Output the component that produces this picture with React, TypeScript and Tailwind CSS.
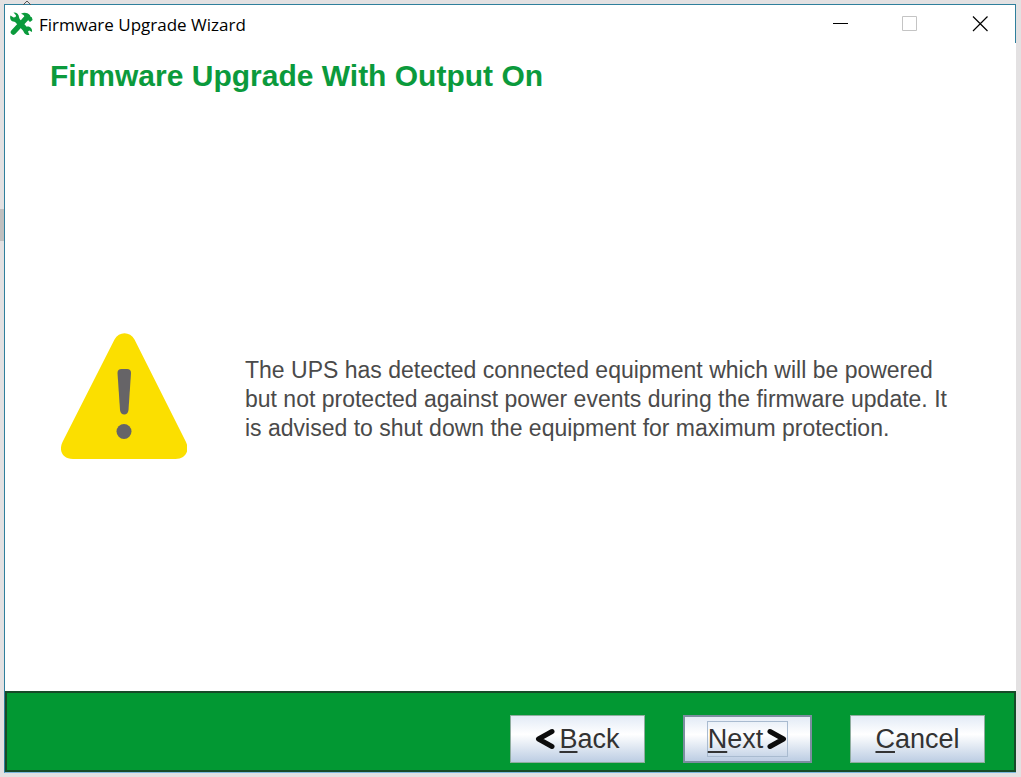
import React from 'react';

const FONT = "font-['Liberation_Sans',Arial,sans-serif]";

/** Crossed wrench and hammer, shown at the left of the title bar. */
function ToolsIcon() {
  return (
    <svg viewBox="0 0 24 24" className="size-6 shrink-0" aria-hidden="true">
      <g stroke="#0b9a3c" fill="none">
        <path d="M6.5 6.5L18 19" strokeWidth="5.500" />
        <path d="M17.5 6L4.500 20" strokeWidth="5.500" strokeLinecap="round" />
      </g>
      <g fill="#0b9a3c">
        <path d="M4.5 .5L7 3.200 6.6 5 4.6 5.400 1.400 3.600C.4 7.200 2.400 10 5.6 9.800L8.6 9.8 10.6 7.6 10 5C9.8 2.400 7.600 .2 4.500 .5z" />
        <path d="M12 1.8C15 .2 18.400 .6 20.8 3L21.6 4.800 22.800 5.200 23.6 8 21 10 19.4 8.4 19 7.2 16 9 13.6 6.8 15.6 4.4C14.8 3 13.6 2.4 12 1.8z" />
        <path d="M14.500 18.600L18.2 14.500C21.400 14.200 23.600 16.800 23 20L20.2 18.400 19 19.600 20.400 23C17.400 23.600 14.500 21.400 14.500 18.600z" />
      </g>
    </svg>
  );
}

function WarningIcon() {
  return (
    <svg viewBox="0 0 126 128" className="h-32 w-[126px] shrink-0" role="img" aria-label="Warning">
      <path
        d="M53.5 7.5C58-.8 69-.8 73.5 7.5L124.500 109C129.500 118.500 124.500 127 114.500 127H12C1.500 127-3 118.500 2 109z"
        fill="#fbdf00"
      />
      <path
        d="M56.500 41Q56.500 37 60.500 37H66Q70 37 70 41L67.500 78C67 84 59.500 84 59 78z"
        fill="#666467"
      />
      <circle cx="63" cy="99.500" r="7.500" fill="#666467" />
    </svg>
  );
}

function Chevron({ flip = false }: { flip?: boolean }) {
  return (
    <svg viewBox="0 0 20 22" className="h-[22px] w-5 shrink-0" aria-hidden="true">
      <path
        d={flip ? 'M3 3.500L16.500 11L3 18.500' : 'M17 3.500L3.500 11L17 18.500'}
        fill="none"
        stroke="#0c0c0c"
        strokeWidth="5"
        strokeLinecap="round"
        strokeLinejoin="round"
      />
    </svg>
  );
}

function TitleBar() {
  return (
    <header className="flex h-[38px] items-center pl-1">
      <ToolsIcon />
      <span className="ml-1.5 pt-0.5 font-['Open_Sans','Segoe_UI',sans-serif] text-[17px] leading-6 text-black">
        Firmware Upgrade Wizard
      </span>
      <div className="ml-auto flex">
        <button type="button" aria-label="Minimize" className="flex h-9 w-[70px] items-center justify-center">
          <svg viewBox="0 0 16 16" className="size-4" fill="none" stroke="#000" aria-hidden="true">
            <path d="M1 7.500H16" />
          </svg>
        </button>
        <button type="button" aria-label="Maximize" disabled className="flex h-9 w-[70px] items-center justify-center">
          <svg viewBox="0 0 16 16" className="size-4" fill="none" stroke="#c4c4c4" aria-hidden="true">
            <path d="M.5 .5H14.500V14.500H.5z" />
          </svg>
        </button>
        <button type="button" aria-label="Close" className="flex h-9 w-[70px] items-center justify-center">
          <svg viewBox="0 0 16 16" className="size-4" fill="none" stroke="#000" strokeWidth="1.200" aria-hidden="true">
            <path d="M1 .5L15.500 15M15.500 .5L1 15" />
          </svg>
        </button>
      </div>
    </header>
  );
}

const BUTTON =
  'flex h-12 items-center justify-center bg-linear-to-b from-[#e3ebf6] via-white via-40% to-[#bccde3] text-[27px] leading-8 text-[#333]';

function Footer() {
  return (
    <footer className="flex justify-end gap-[38px] border-2 border-[#174a28] bg-[#029833] pt-[22px] pr-[29px] pb-[7px]">
      <button type="button" className={`${BUTTON} w-[135px] border border-[#8fae9f]`}>
        <Chevron />
        <span className="ml-1">
          <u className="decoration-2 underline-offset-[3px]">B</u>ack
        </span>
      </button>
      <button type="button" className={`${BUTTON} w-[129px] border-2 border-[#7b8e9f]`}>
        <span className="flex h-9 items-center gap-1 border border-[#a9bbd0]">
          <span>
            <u className="decoration-2 underline-offset-[3px]">N</u>ext
          </span>
          <Chevron flip />
        </span>
      </button>
      <button type="button" className={`${BUTTON} w-[135px] border border-[#8fae9f]`}>
        <span>
          <u className="decoration-2 underline-offset-[3px]">C</u>ancel
        </span>
      </button>
    </footer>
  );
}

export default function App() {
  return (
    <div className={`relative flex min-h-screen flex-col bg-[#e3e1e2] p-1 ${FONT}`}>
      {/* bits of the window behind */}
      <svg viewBox="0 0 10 5" className="absolute top-0 left-[22px] h-[5px] w-2.5" aria-hidden="true">
        <path d="M1 5L5 1L9 5" fill="none" stroke="#555" />
      </svg>
      <div className="absolute top-[209px] left-0 h-8 w-1 bg-[#bfbfbf]" />

      <div className="mr-px flex flex-1 flex-col border-t border-b border-l border-t-[#2f7f9c] border-b-[#7db8e0] border-l-[#2f7f9c] bg-white">
        <div className="border-r border-[#2f7f9c]">
          <TitleBar />
        </div>
        <main className="flex flex-1 flex-col pr-12 pl-[45px]">
          <h1 className="mt-[15px] text-[30px] leading-9 font-bold text-[#0b9a3c]">Firmware Upgrade With Output On</h1>
          <div className="flex flex-1 items-center gap-[58px] pt-1.5 pr-3 pl-[11px]">
            <WarningIcon />
            <p className="pt-2 text-[23px] leading-[29px] text-[#4a4a4a]">
              The UPS has detected connected equipment which will be powered but not protected against power events
              during the firmware update. It is advised to shut down the equipment for maximum protection.
            </p>
          </div>
        </main>
        <Footer />
      </div>
    </div>
  );
}
